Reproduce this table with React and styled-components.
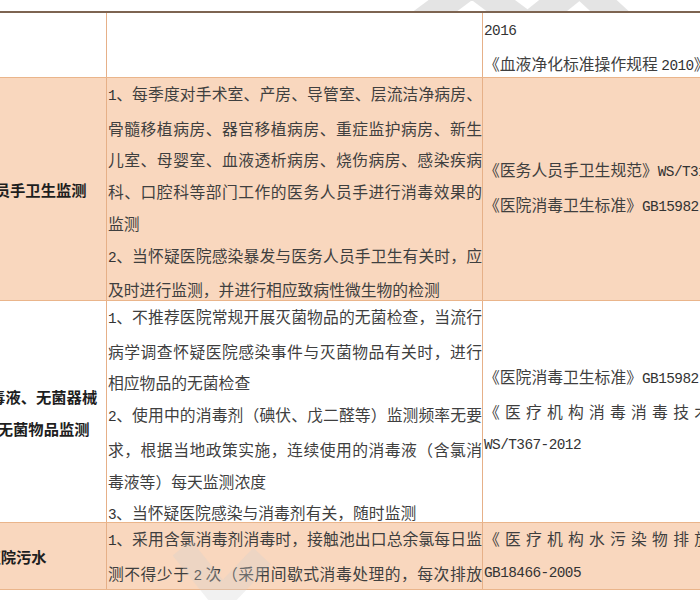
import React from "react"
import styled, { createGlobalStyle } from "styled-components"

const GlobalStyle = createGlobalStyle`
  html, body {
    margin: 0;
    padding: 0;
    background: #ffffff;
  }
  body {
    font-family: "Noto Sans CJK SC", "Noto Sans", sans-serif;
  }
`

const Page = styled.div`
  position: relative;
  width: 700px;
  height: 600px;
  overflow: hidden;
  background: #ffffff;
`

const Sheet = styled.div`
  margin: 11px 0 0 -40px;
  width: 813px;
  border-top: 2px solid #7d6451;
`

const Row = styled.div`
  display: grid;
  grid-template-columns: 147px 376px 290px;
  height: ${p => p.$h}px;
  background: ${p => (p.$peach ? "#f9d7be" : "#ffffff")};
  border-bottom: 1px solid #eab58b;
  box-sizing: content-box;
`

const Cell = styled.div`
  box-sizing: border-box;
  border-right: ${p => (p.$last ? "none" : "1px solid #e6b088")};
  display: flex;
  flex-direction: column;
  justify-content: ${p => (p.$middle ? "center" : "flex-start")};
  overflow: hidden;
`

const Title = styled(Cell)`
  align-items: center;
  padding-right: ${p => Math.max(0, -(p.$shift || 0)) * 2}px;
  padding-left: ${p => Math.max(0, p.$shift || 0) * 2}px;
  font-weight: 700;
  font-size: 15.3px;
  line-height: 32px;
  color: #1e1e1e;
  white-space: nowrap;
`

const Body = styled(Cell)`
  padding-left: 1px;
  font-size: 15.8px;
  line-height: 31.7px;
  color: #3f3f3f;
`

const Line = styled.div`
  white-space: ${p => (p.$justify ? "normal" : "nowrap")};
  text-align: ${p => (p.$justify ? "justify" : "left")};
  text-align-last: ${p => (p.$justify ? "justify" : "auto")};
  width: ${p => (p.$justify ? "100%" : "auto")};
`

const Code = styled.span`
  font-family: "Liberation Mono", monospace;
  font-size: 14.4px;
  letter-spacing: -0.55px;
  color: #333333;
`

const Mark = styled.svg`
  position: absolute;
  left: 0;
  top: 0;
  pointer-events: none;
`

// split latin runs into the mono face, like the half-width glyphs of the original
const Mixed = ({ text }) =>
  text.split(/([A-Za-z0-9/\-.]+)/).map((part, i) =>
    /[A-Za-z0-9]/.test(part) ? <Code key={i}>{part}</Code> : <React.Fragment key={i}>{part}</React.Fragment>
  )

const Lines = ({ items }) =>
  items.map((l, i) => (
    <Line key={i} $justify={l.j}>
      <Mixed text={l.t} />
    </Line>
  ))

const j = t => ({ t, j: true })
const n = t => ({ t, j: false })

const rows = [
  {
    h: 64,
    peach: false,
    title: [],
    body: [],
    refs: [n("2016"), n("《血液净化标准操作规程 2010》")],
    refsMiddle: false,
  },
  {
    h: 222,
    peach: true,
    title: ["人员手卫生监测"],
    body: [
      j("1、每季度对手术室、产房、导管室、层流洁净病房、"),
      j("骨髓移植病房、器官移植病房、重症监护病房、新生"),
      j("儿室、母婴室、血液透析病房、烧伤病房、感染疾病"),
      j("科、口腔科等部门工作的医务人员手进行消毒效果的"),
      n("监测"),
      j("2、当怀疑医院感染暴发与医务人员手卫生有关时，应"),
      n("及时进行监测，并进行相应致病性微生物的检测"),
    ],
    refs: [n("《医务人员手卫生规范》WS/T313-2009"), n("《医院消毒卫生标准》GB15982-2012")],
    refsMiddle: true,
  },
  {
    h: 221,
    peach: false,
    title: ["消毒液、无菌器械", "、无菌物品监测"],
    shift: 3,
    body: [
      j("1、不推荐医院常规开展灭菌物品的无菌检查，当流行"),
      j("病学调查怀疑医院感染事件与灭菌物品有关时，进行"),
      n("相应物品的无菌检查"),
      j("2、使用中的消毒剂（碘伏、戊二醛等）监测频率无要"),
      j("求，根据当地政策实施，连续使用的消毒液（含氯消"),
      n("毒液等）每天监测浓度"),
      n("3、当怀疑医院感染与消毒剂有关，随时监测"),
    ],
    refs: [n("《医院消毒卫生标准》GB15982-2012"), j("《医疗机构消毒消毒技术规范》"), n("WS/T367-2012")],
    refsMiddle: true,
  },
  {
    h: 66,
    peach: true,
    title: ["医院污水"],
    shift: -17,
    body: [
      j("1、采用含氯消毒剂消毒时，接触池出口总余氯每日监"),
      j("测不得少于 2 次（采用间歇式消毒处理的，每次排放"),
    ],
    refs: [j("《医疗机构水污染物排放标准》"), n("GB18466-2005")],
    refsMiddle: false,
  },
]

export default function App() {
  return (
    <Page>
      <GlobalStyle />
      <Sheet>
        {rows.map((r, i) => (
          <Row key={i} $h={r.h} $peach={r.peach}>
            <Title $middle $shift={r.shift}>
              {r.title.map((t, k) => (
                <div key={k}>{t}</div>
              ))}
            </Title>
            <Body>
              <Lines items={r.body} />
            </Body>
            <Body $middle={r.refsMiddle} $last>
              <Lines items={r.refs} />
            </Body>
          </Row>
        ))}
      </Sheet>
      <Mark width="700" height="600" viewBox="0 0 700 600">
        <defs>
          <clipPath id="above">
            <rect x="0" y="0" width="700" height="11" />
          </clipPath>
        </defs>
        <g fill="none" stroke="#cfcfcf" strokeWidth="26" opacity="0.55" clipPath="url(#above)">
          <polyline points="410,30 472,-16 520,20" />
          <polyline points="530,24 580,-16 630,30" />
        </g>
        <g fill="none" stroke="#d2d2d2" strokeWidth="24" opacity="0.3">
          <polyline points="182,548 222,598 262,556" />
        </g>
      </Mark>
    </Page>
  )
}
